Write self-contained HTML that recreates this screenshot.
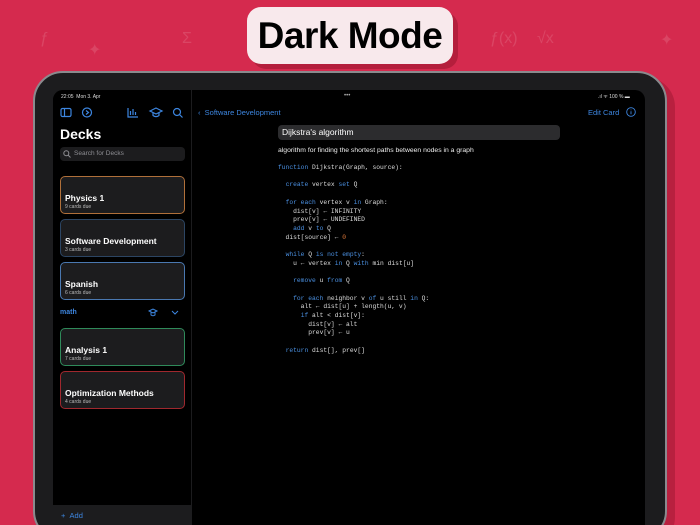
<!DOCTYPE html>
<html><head><style>
*{margin:0;padding:0;box-sizing:border-box}
html,body{width:700px;height:525px;overflow:hidden}
body{background:#d52a4e;font-family:"Liberation Sans",sans-serif;position:relative}
.ab{position:absolute}
.title{left:247px;top:7px;width:206px;height:57px;background:#f8e9ec;border-radius:14px;box-shadow:5px 5px 0 rgba(120,10,30,.35);font-weight:bold;font-size:37px;color:#000;text-align:center;line-height:57px;letter-spacing:-.5px}
.frame{left:33px;top:71px;width:634px;height:470px;background:#1c1c1e;border:2px solid #8a8a8e;border-radius:30px;box-shadow:8px 6px 0 rgba(120,10,30,.3)}
.screen{left:53px;top:90px;width:592px;height:440px;background:#000;border-radius:10px 10px 0 0;overflow:hidden}
.side{left:0;top:0;width:139px;height:440px;background:#000;border-right:1px solid #1c1c1e}
.card{position:absolute;left:7px;width:125px;height:38px;background:#1c1c1e;border-radius:5px;border:1.5px solid}
.card b{position:absolute;left:4px;top:16px;color:#fff;font-size:8.5px}
.card span{position:absolute;left:4px;top:27px;color:#bbb;font-size:5px}
.code{font-family:"Liberation Mono",monospace;font-size:6.3px;color:#ddd;white-space:pre;line-height:8.7px}
.k{color:#4a8fe0}.o{color:#e07a3a}
.blue{color:#3d86e0}
.bg{color:rgba(255,255,255,.13);font-size:16px}
</style></head><body>
<div class="ab bg" style="left:40px;top:30px">ƒ</div>
<div class="ab bg" style="left:182px;top:30px">Σ</div>
<div class="ab bg" style="left:490px;top:30px">ƒ(x)</div>
<div class="ab bg" style="left:537px;top:30px">√x</div>
<div class="ab bg" style="left:660px;top:30px">✦</div>
<div class="ab bg" style="left:88px;top:40px">✦</div>
<div class="ab title">Dark Mode</div>
<div class="ab frame"></div>
<div class="ab screen">
 <div class="ab side">
  <div class="ab" style="left:8px;top:4px;font-size:5px;color:#ddd">22:05 &nbsp;Mon 3. Apr</div>
  <svg class="ab" style="left:7px;top:17px" width="130" height="12" fill="none" stroke="#3d86e0" stroke-width="1.2">
   <rect x="1" y="1.5" width="10" height="8" rx="1.5"/><line x1="4.5" y1="1.5" x2="4.5" y2="9.5"/>
   <circle cx="27" cy="5.5" r="4.5"/><path d="M26 3.5l2.5 2-2.5 2"/>
   <path d="M68 1v9h10M70.5 8v-4M73 8v-6M75.5 8v-3"/>
   <path d="M90 4l6-3 6 3-6 3z M93 5.5v3c2 1.5 4 1.5 6 0v-3"/>
   <circle cx="117" cy="5" r="3.5"/><path d="M119.5 7.5l3 3"/>
  </svg>
  <div class="ab" style="left:7px;top:36px;font-size:14px;font-weight:bold;color:#fff">Decks</div>
  <div class="ab" style="left:7px;top:57px;width:125px;height:14px;background:#1c1c1e;border-radius:4px;color:#8e8e93;font-size:6.5px;line-height:14px;padding-left:14px">Search for Decks</div>
  <svg class="ab" style="left:10px;top:60px" width="8" height="8" fill="none" stroke="#8e8e93" stroke-width="1"><circle cx="3.3" cy="3.3" r="2.5"/><path d="M5 5l2.5 2.5"/></svg>
  <div class="card" style="top:86px;border-color:#b0703a"><b>Physics 1</b><span>9 cards due</span></div>
  <div class="card" style="top:129px;border-color:#2c4563"><b>Software Development</b><span>3 cards due</span></div>
  <div class="card" style="top:172px;border-color:#4a78b0"><b>Spanish</b><span>6 cards due</span></div>
  <div class="ab blue" style="left:7px;top:219px;font-size:7px;font-weight:bold">math</div>
  <svg class="ab" style="left:95px;top:218px" width="40" height="10" fill="none" stroke="#3d86e0" stroke-width="1"><path d="M1 3l4-2 4 2-4 2z M3 4v3c1.3 1 2.7 1 4 0v-3"/><path d="M24 3l3 3 3-3"/></svg>
  <div class="card" style="top:238px;border-color:#2f8a5a"><b>Analysis 1</b><span>7 cards due</span></div>
  <div class="card" style="top:281px;border-color:#a0282e"><b>Optimization Methods</b><span>4 cards due</span></div>
  <div class="ab" style="left:0;top:415px;width:139px;height:25px;background:#1c1c1e"></div>
  <div class="ab blue" style="left:8px;top:421px;font-size:7.5px">+ &nbsp;Add</div>
 </div>
 <div class="ab" style="left:291px;top:3px;color:#aaa;font-size:6px">•••</div>
 <div class="ab" style="left:545px;top:4px;color:#ddd;font-size:5px">.ıl ᯤ 100 % ▬</div>
 <div class="ab blue" style="left:145px;top:18px;font-size:7.5px">‹ &nbsp;Software Development</div>
 <div class="ab blue" style="left:535px;top:18px;font-size:7.5px">Edit Card</div>
 <svg class="ab" style="left:573px;top:17px" width="10" height="10" fill="none" stroke="#3d86e0" stroke-width=".9"><circle cx="5" cy="5" r="4.3"/><path d="M5 4.3v3M5 2.6v.6"/></svg>
 <div class="ab" style="left:225px;top:35px;width:282px;height:15px;background:#2c2c2e;border-radius:4px;color:#fff;font-size:8.5px;line-height:15px;padding-left:4px">Dijkstra's algorithm</div>
 <div class="ab" style="left:225px;top:57px;color:#eee;font-size:6.8px">algorithm for finding the shortest paths between nodes in a graph</div>
 <div class="ab code" style="left:225px;top:74px"><span class="k">function</span> Dijkstra(Graph, source):

  <span class="k">create</span> vertex <span class="k">set</span> Q

  <span class="k">for each</span> vertex v <span class="k">in</span> Graph:
    dist[v] ← INFINITY
    prev[v] ← UNDEFINED
    <span class="k">add</span> v <span class="k">to</span> Q
  dist[source] ← <span class="o">0</span>

  <span class="k">while</span> Q <span class="k">is not empty</span>:
    u ← vertex <span class="k">in</span> Q <span class="k">with</span> min dist[u]

    <span class="k">remove</span> u <span class="k">from</span> Q

    <span class="k">for each</span> neighbor v <span class="k">of</span> u still <span class="k">in</span> Q:
      alt ← dist[u] + length(u, v)
      <span class="k">if</span> alt &lt; dist[v]:
        dist[v] ← alt
        prev[v] ← u

  <span class="k">return</span> dist[], prev[]</div>
</div>
</body></html>
